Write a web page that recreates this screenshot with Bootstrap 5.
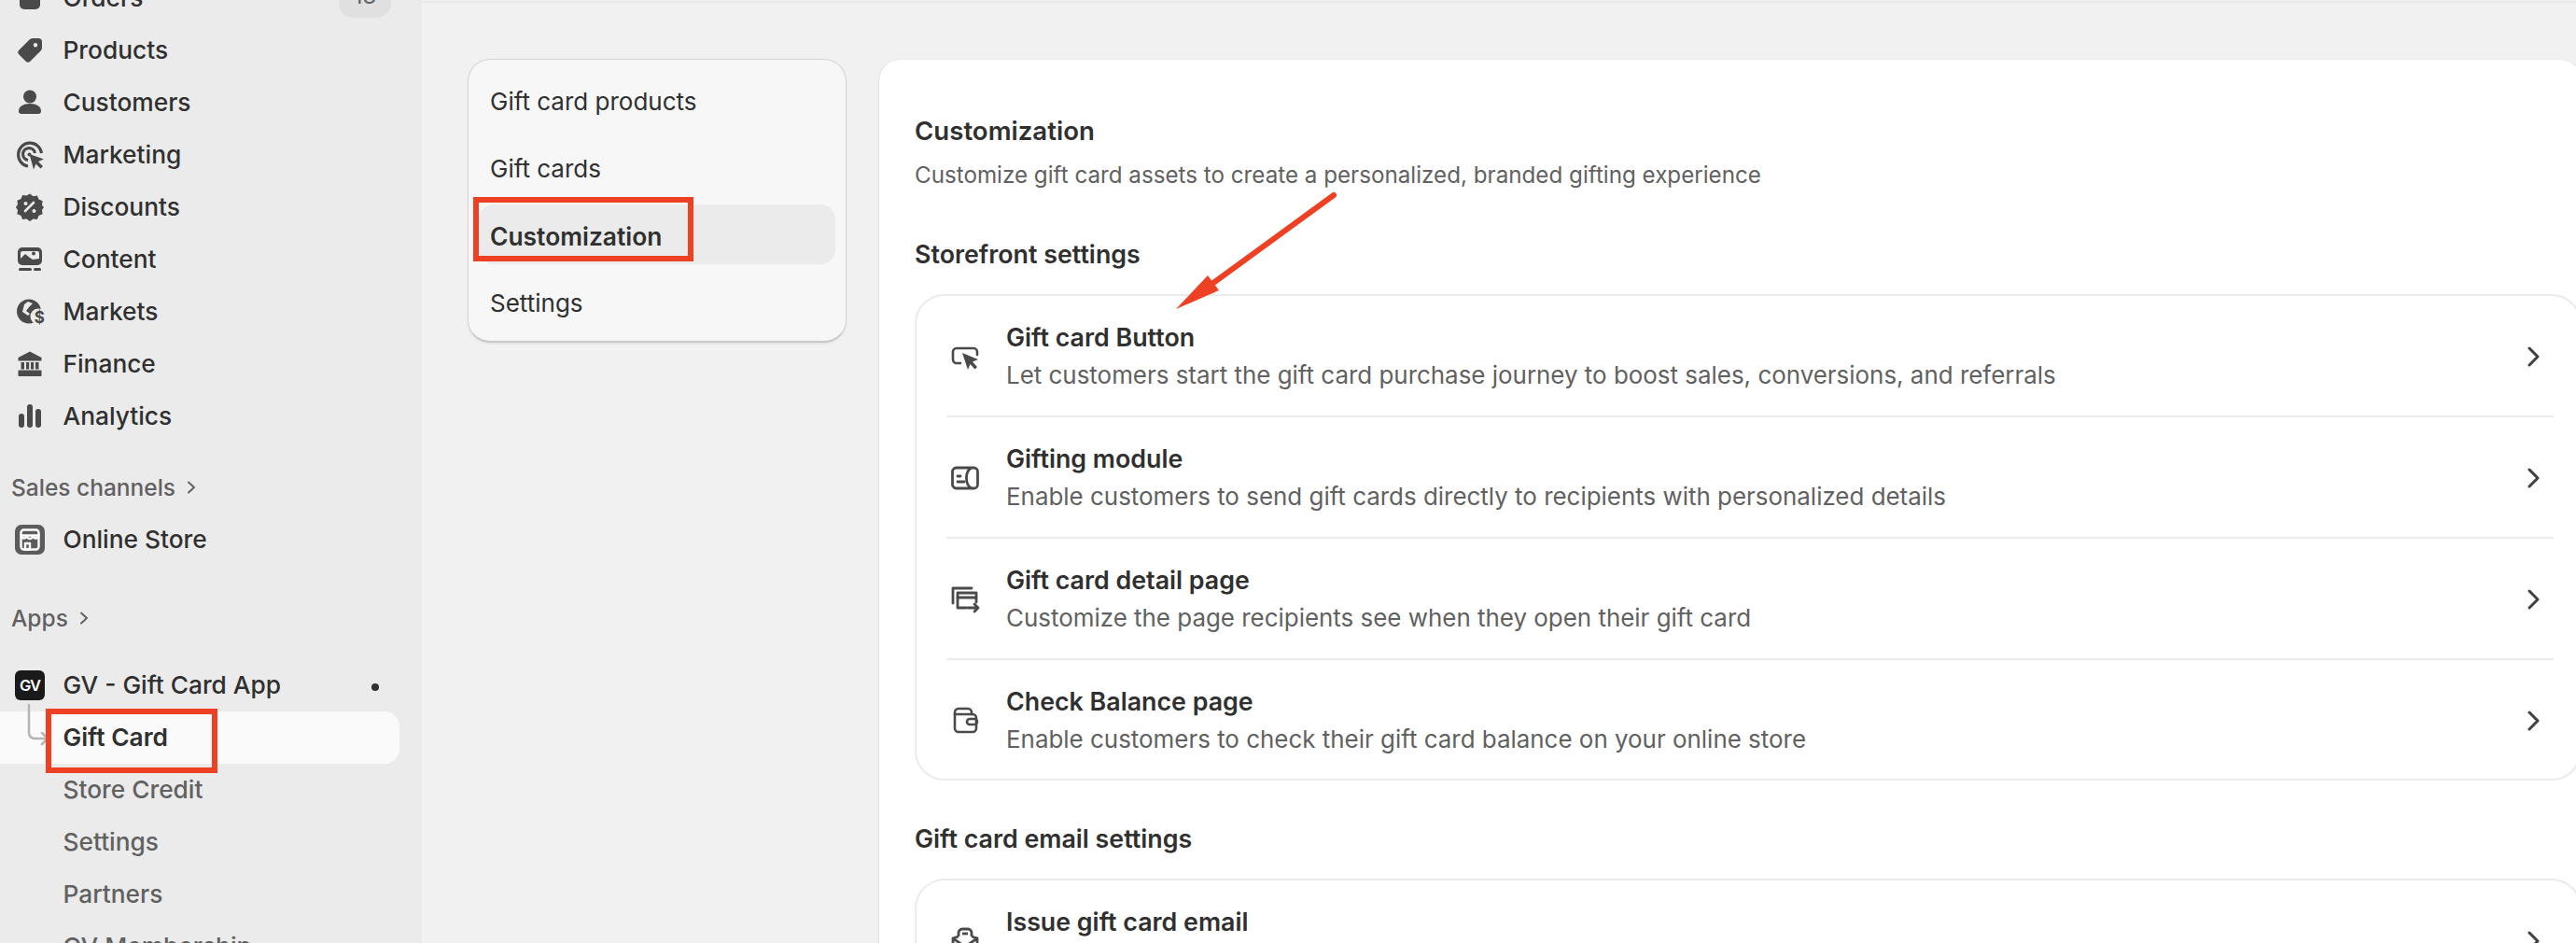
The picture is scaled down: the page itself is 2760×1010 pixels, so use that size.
<!DOCTYPE html>
<html lang="en">
  <head>
    <meta charset="UTF-8" />
    <title>Gift Card - Customization</title>
    <link
      rel="stylesheet"
      href="https://cdn.jsdelivr.net/npm/bootstrap@5.3.0/dist/css/bootstrap.min.css"
    />
    <style>
      html, body { height: 1010px; overflow: hidden; }
      body {
        position: relative;
        background: #f1f1f1;
        color: #303030;
        font-family: Inter, "Liberation Sans", sans-serif;
        font-size: 26px;
        line-height: 32px;
      }
      .page-wrap { width: 2760px; height: 1010px; }

      /* left admin sidebar */
      .side-bar {
        width: 452px;
        height: 1010px;
        flex: none;
        background: #ebebeb;
        overflow: hidden;
      }
      .side-list { margin-top: -30px; }
      .side-row {
        height: 56px;
        padding-left: 18px;
        padding-right: 33px;
        font-weight: 500;
        font-size: 26.3px;
        color: #303030;
      }
      .side-row svg { width: 32px; height: 32px; margin-left: -2px; margin-right: 19.500px; flex: none; }
      .side-count {
        width: 56px;
        height: 43px;
        margin-left: auto;
        margin-top: -1px;
        background: #e0e0e0;
        border-radius: 16px;
        color: #616161;
        font-size: 24px;
        font-weight: 400;
        text-align: center;
        line-height: 40px;
      }
      .side-head {
        height: 56px;
        padding-left: 12px;
        color: #616161;
        font-weight: 500;
        font-size: 24.5px;
      }
      .side-head svg { width: 16px; height: 16px; margin-left: 9px; }
      .head-sales { margin-top: 20px; }
      .head-apps { margin-top: 28px; margin-bottom: 16px; }
      .side-sub {
        height: 56px;
        padding-left: 67.500px;
        color: #616161;
        font-weight: 500;
        font-size: 26.3px;
      }
      .side-sub.is-on {
        width: 428px;
        background: #fafafa;
        border-radius: 0 16px 16px 0;
        color: #303030;
        font-weight: 600;
      }
      .app-dot {
        width: 8px;
        height: 8px;
        margin-left: auto;
        margin-right: 13px;
        margin-top: 4px;
        border-radius: 50%;
        background: #303030;
      }
      .tree-line { position: absolute; left: 28px; top: 752px; width: 24px; height: 50px; }

      /* main area */
      .main-area { padding: 63px 0 0 49px; gap: 34px; border-left: 2px solid #f3f3f3; flex-grow: 1; min-width: 0; }
      .top-rule { position: absolute; left: 452px; right: 0; top: 1px; height: 2px; background: #e8e8e8; }
      .sub-panel {
        width: 406px;
        height: 304px;
        margin-left: -2px;
        flex: none;
        flex-wrap: nowrap;
        background: #f7f7f7;
        border: 1px solid #d4d4d4;
        border-bottom: 2px solid #c9c9c9;
        border-radius: 24px;
        box-shadow: 0 2px 2px rgba(0, 0, 0, 0.05);
        padding: 11px 11px 0;
      }
      .sub-link {
        height: 64px;
        flex: none;
        margin-bottom: 8px;
        padding: 4px 12px 0;
        border-radius: 16px;
        color: #303030;
        font-weight: 400;
        font-size: 26px;
      }
      .sub-link:hover { color: #303030; }
      .sub-link.is-on { background: #ebebeb; font-weight: 600; font-size: 26.4px; }

      .main-card {
        flex-grow: 1;
        min-width: 0;
        height: 1100px;
        margin-right: -6px;
        padding: 0 0 0 38px;
        background: #fff;
        border: 0;
        border-left: 1px solid #e3e3e3;
        border-top: 1px solid #ebebeb;
        border-radius: 24px;
      }
      .page-title { margin: 60px 0 0; height: 32px; font-size: 27.6px; font-weight: 600; color: #303030; line-height: 32px; }
      .page-desc { margin: 16px 0 0; height: 32px; color: #616161; font-size: 24.2px; }
      .sect-title { margin: 52px 0 0; height: 32px; font-size: 26.8px; font-weight: 600; color: #303030; line-height: 32px; }
      /* .card > .list-group resets the borders, so this needs the parent too */
      .main-card > .set-list {
        flex: none;
        margin-top: 27px;
        border: 2px solid #ebebeb;
        border-radius: 32px;
        background: #fff;
        padding: 0 28px 0 32px;
      }
      .set-row {
        height: 130px;
        flex: none;
        padding: 2px 0 0;
        border: 0;
        border-bottom: 2px solid #ebebeb;
        border-radius: 0 !important;
        background: transparent;
        color: #303030;
      }
      .set-row:last-child { border-bottom: 0; height: 127px; }
      .set-row > svg.set-icon { width: 32px; height: 32px; margin-right: 28px; flex: none; margin-left: 4px; }
      .set-row > svg.set-go { width: 24px; height: 24px; margin-left: auto; margin-right: 10px; flex: none; }
      .set-name { font-weight: 600; font-size: 26.8px; line-height: 32px; margin-top: -1px; }
      .set-text { color: #616161; font-size: 25.93px; line-height: 32px; margin-top: 9px; }
      .main-card > .next-title { margin-top: 46px; }

      /* red annotations lying over the page */
      .note-box { position: absolute; border: 6px solid #ee4124; }
      .note-gift { left: 49px; top: 759px; width: 184px; height: 69px; }
      .note-custom { left: 507px; top: 211px; width: 236px; height: 69px; }
      .note-arrow { position: absolute; left: 1240px; top: 190px; width: 210px; height: 160px; }
    </style>
  </head>
  <body>
    <div class="page-wrap d-flex">
      <aside class="side-bar">
        <div class="side-list">
          <div class="side-row d-flex align-items-center">
            <svg viewBox="0 0 32 32" fill="#4a4a4a"><path d="M5 9a5 5 0 0 1 5-5h12a5 5 0 0 1 5 5v14a5 5 0 0 1-5 5H10a5 5 0 0 1-5-5z"/></svg>
            Orders<span class="side-count">13</span>
          </div>
          <div class="side-row d-flex align-items-center">
            <svg viewBox="0 0 32 32" fill="#4a4a4a"><path fill-rule="evenodd" d="M19 3h6a4 4 0 0 1 4 4v6a5 5 0 0 1-1.500 3.500L16.500 27.500a3.500 3.500 0 0 1-5 0L4.500 20.500a3.500 3.500 0 0 1 0-5L15.500 4.500A5 5 0 0 1 19 3zm3 5a2.200 2.200 0 1 0 0 4.400A2.200 2.200 0 0 0 22 8z"/></svg>
            Products
          </div>
          <div class="side-row d-flex align-items-center">
            <svg viewBox="0 0 32 32" fill="#4a4a4a"><circle cx="16" cy="9.500" r="7"/><path d="M4 25c0-5 5-8 12-8s12 3 12 8c0 2-1 3-3 3H7c-2 0-3-1-3-3z"/></svg>
            Customers
          </div>
          <div class="side-row d-flex align-items-center">
            <svg viewBox="0 0 32 32" fill="none" stroke="#4a4a4a" stroke-width="3.200"><path d="M14 28A12.500 12.500 0 1 1 28.500 14"/><path d="M14 21.500a6.500 6.500 0 1 1 7.500-7.500"/><circle cx="15.500" cy="15.500" r="2" fill="#4a4a4a" stroke="none"/><path fill="#4a4a4a" stroke="none" d="M15.500 15l15.500 5.500-6 2.500 5 5-2.500 2.500-5-5-2.500 6z"/></svg>
            Marketing
          </div>
          <div class="side-row d-flex align-items-center">
            <svg viewBox="0 0 32 32" fill="#4a4a4a"><path fill-rule="evenodd" d="M16 1.500l3.500 2.700 4.400-.7 1.600 4.100 4.100 1.700-.6 4.400L31 16l-2 2.900.6 4.400-4.100 1.700-1.600 4.100-4.400-.7L16 31l-3.500-2.600-4.400.7-1.600-4.100-4.100-1.700.6-4.400L1 16l2-2.900-.6-4.400 4.100-1.700 1.600-4.100 4.400.7z"/><path d="M11 20l9-9" stroke="#ebebeb" stroke-width="2.600" stroke-linecap="round"/><circle cx="11.500" cy="12" r="2" fill="#ebebeb"/><circle cx="20.500" cy="20" r="2" fill="#ebebeb"/></svg>
            Discounts
          </div>
          <div class="side-row d-flex align-items-center">
            <svg viewBox="0 0 32 32" fill="#4a4a4a"><path fill-rule="evenodd" d="M8 3h16a5 5 0 0 1 5 5v9a5 5 0 0 1-5 5H8a5 5 0 0 1-5-5V8a5 5 0 0 1 5-5z"/><path fill="#ebebeb" d="M6 15l5-5 5 4 3 2 7-1v-6a2 2 0 0 0-2-2H8a2 2 0 0 0-2 2z"/><circle cx="20" cy="9.500" r="2" fill="#4a4a4a"/><rect x="4" y="25" width="14" height="3" rx="1.500"/><rect x="20" y="25" width="8" height="3" rx="1.500"/></svg>
            Content
          </div>
          <div class="side-row d-flex align-items-center">
            <svg viewBox="0 0 32 32" fill="#4a4a4a"><circle cx="15" cy="15.500" r="13"/><path d="M10 8l4-3 5 2-4 4-3 4 4 3-2 2-6-4z" fill="#ebebeb"/><circle cx="25" cy="21" r="8.500" fill="#ebebeb"/><text x="20.800" y="28" font-family="Inter, sans-serif" font-size="17" font-weight="700" fill="#4a4a4a">$</text></svg>
            Markets
          </div>
          <div class="side-row d-flex align-items-center">
            <svg viewBox="0 0 32 32" fill="#4a4a4a"><path d="M16 2.500L28.500 9v3.500h-25V9z"/><rect x="3.500" y="22.500" width="25" height="6.500" rx="1"/><rect x="6.500" y="14" width="3.500" height="7.500"/><rect x="12" y="14" width="3.200" height="7.500"/><rect x="17" y="14" width="3.200" height="7.500"/><rect x="22" y="14" width="3.500" height="7.500"/></svg>
            Finance
          </div>
          <div class="side-row d-flex align-items-center">
            <svg viewBox="0 0 32 32" fill="#4a4a4a"><rect x="4" y="13" width="6" height="15" rx="3"/><rect x="13" y="3" width="6" height="25" rx="3"/><rect x="22" y="8" width="6" height="20" rx="3"/></svg>
            Analytics
          </div>

          <div class="side-head head-sales d-flex align-items-center">
            Sales channels
            <svg viewBox="0 0 16 16" fill="none" stroke="#616161" stroke-width="2" stroke-linecap="round" stroke-linejoin="round"><path d="M5 2.500L11 8l-6 5.500"/></svg>
          </div>
          <div class="side-row d-flex align-items-center">
            <svg viewBox="0 0 32 32"><rect width="32" height="32" rx="7" fill="#5c5c5c"/><g fill="none" stroke="#fff" stroke-width="2.400" stroke-linejoin="round"><rect x="6.500" y="5.500" width="19" height="21" rx="3"/><path d="M11 20v6.500h5V20zM6.500 11.500a3 3 0 0 0 6 0 3.500 3.500 0 0 0 7 0 3 3 0 0 0 6 0z"/></g></svg>
            Online Store
          </div>

          <div class="side-head head-apps d-flex align-items-center">
            Apps
            <svg viewBox="0 0 16 16" fill="none" stroke="#616161" stroke-width="2" stroke-linecap="round" stroke-linejoin="round"><path d="M5 2.500L11 8l-6 5.500"/></svg>
          </div>
          <div class="side-row d-flex align-items-center">
            <svg viewBox="0 0 32 32"><rect width="32" height="32" rx="6" fill="#1a1a1a"/><text x="16" y="21.500" text-anchor="middle" font-family="Inter, sans-serif" font-size="16.500" font-weight="600" letter-spacing="-1" fill="#fff">GV</text></svg>
            GV - Gift Card App<span class="app-dot"></span>
          </div>
          <div class="side-sub is-on d-flex align-items-center">Gift Card</div>
          <div class="side-sub d-flex align-items-center">Store Credit</div>
          <div class="side-sub d-flex align-items-center">Settings</div>
          <div class="side-sub d-flex align-items-center">Partners</div>
          <div class="side-sub d-flex align-items-center">GV Membership</div>
        </div>
      </aside>

      <main class="main-area d-flex align-items-start">
        <nav class="sub-panel nav flex-column">
          <a class="sub-link nav-link d-flex align-items-center" href="#">Gift card products</a>
          <a class="sub-link nav-link d-flex align-items-center" href="#">Gift cards</a>
          <a class="sub-link is-on nav-link d-flex align-items-center" href="#">Customization</a>
          <a class="sub-link nav-link d-flex align-items-center" href="#">Settings</a>
        </nav>

        <section class="main-card card">
          <h1 class="page-title">Customization</h1>
          <p class="page-desc">Customize gift card assets to create a personalized, branded gifting experience</p>

          <h2 class="sect-title">Storefront settings</h2>
          <div class="set-list list-group">
            <a href="#" class="set-row list-group-item d-flex align-items-center">
              <svg class="set-icon" viewBox="0 0 32 32" fill="none" stroke="#4a4a4a" stroke-width="2.600" stroke-linecap="round"><path d="M11 23H7a4 4 0 0 1-4-4v-8a4 4 0 0 1 4-4h18a4 4 0 0 1 4 4v3"/><path fill="#4a4a4a" stroke="none" d="M13 12l17 7-6 2.500 5 5.500-2.500 2.500-5-5.500-2.500 6z"/></svg>
              <div><div class="set-name">Gift card Button</div><div class="set-text">Let customers start the gift card purchase journey to boost sales, conversions, and referrals</div></div>
              <svg class="set-go" viewBox="0 0 24 24" fill="none" stroke="#404040" stroke-width="3" stroke-linecap="round" stroke-linejoin="round"><path d="M8 3l9 9-9 9"/></svg>
            </a>
            <a href="#" class="set-row list-group-item d-flex align-items-center">
              <svg class="set-icon" viewBox="0 0 32 32" fill="none" stroke="#4a4a4a" stroke-width="2.800" stroke-linecap="round"><rect x="2.500" y="5" width="27" height="22" rx="4"/><path d="M22 5.500c-3 2-4.500 6-4.500 10.500s1.500 8.500 4.500 10.500"/><path d="M8 14h3M8 20h7"/></svg>
              <div><div class="set-name">Gifting module</div><div class="set-text">Enable customers to send gift cards directly to recipients with personalized details</div></div>
              <svg class="set-go" viewBox="0 0 24 24" fill="none" stroke="#404040" stroke-width="3" stroke-linecap="round" stroke-linejoin="round"><path d="M8 3l9 9-9 9"/></svg>
            </a>
            <a href="#" class="set-row list-group-item d-flex align-items-center">
              <svg class="set-icon" viewBox="0 0 32 32" fill="none" stroke="#4a4a4a" stroke-width="2.800" stroke-linecap="round" stroke-linejoin="round"><path d="M3 20V4h20"/><path d="M17 25H8V9h20v10"/><path d="M8 14h20"/><path d="M19 25h11M26 21l4 4-4 4"/></svg>
              <div><div class="set-name">Gift card detail page</div><div class="set-text">Customize the page recipients see when they open their gift card</div></div>
              <svg class="set-go" viewBox="0 0 24 24" fill="none" stroke="#404040" stroke-width="3" stroke-linecap="round" stroke-linejoin="round"><path d="M8 3l9 9-9 9"/></svg>
            </a>
            <a href="#" class="set-row list-group-item d-flex align-items-center">
              <svg class="set-icon" viewBox="0 0 32 32" fill="none" stroke="#4a4a4a" stroke-width="2.600" stroke-linecap="round" stroke-linejoin="round"><path d="M5 9V7a4 4 0 0 1 4-4h10a4 4 0 0 1 4 4v2"/><path d="M5 9h19a4 4 0 0 1 4 4v11a4 4 0 0 1-4 4H9a4 4 0 0 1-4-4z"/><rect x="18" y="14" width="11" height="6" rx="3"/></svg>
              <div><div class="set-name">Check Balance page</div><div class="set-text">Enable customers to check their gift card balance on your online store</div></div>
              <svg class="set-go" viewBox="0 0 24 24" fill="none" stroke="#404040" stroke-width="3" stroke-linecap="round" stroke-linejoin="round"><path d="M8 3l9 9-9 9"/></svg>
            </a>
          </div>

          <h2 class="sect-title next-title">Gift card email settings</h2>
          <div class="set-list list-group">
            <a href="#" class="set-row list-group-item d-flex align-items-center">
              <svg class="set-icon" viewBox="0 0 32 32" fill="none" stroke="#4a4a4a" stroke-width="2.800" stroke-linejoin="round"><path d="M9 11V7a4 4 0 0 1 4-4h6a4 4 0 0 1 4 4v4"/><path d="M3 13l6-2M29 13l-6-2M3 13v13h26V13L16 22z"/><path d="M13 8h6"/></svg>
              <div><div class="set-name">Issue gift card email</div><div class="set-text">Customize the email sent when a gift card is issued</div></div>
              <svg class="set-go" viewBox="0 0 24 24" fill="none" stroke="#404040" stroke-width="3" stroke-linecap="round" stroke-linejoin="round"><path d="M8 3l9 9-9 9"/></svg>
            </a>
          </div>
        </section>
      </main>
    </div>

    <div class="top-rule"></div>
    <svg class="tree-line" viewBox="0 0 24 50" fill="none" stroke="#b5b5b5" stroke-width="2.500" stroke-linecap="round" stroke-linejoin="round"><path d="M3 3v30a6 6 0 0 0 6 6h13M17 33l6 6-6 6"/></svg>
    <div class="note-box note-gift"></div>
    <div class="note-box note-custom"></div>
    <svg class="note-arrow" viewBox="1240 190 210 160"><path d="M1429 209L1300 303" stroke="#ee4124" stroke-width="6" stroke-linecap="round"/><path d="M1260 331L1294 295L1306 311z" fill="#ee4124"/></svg>
  </body>
</html>
